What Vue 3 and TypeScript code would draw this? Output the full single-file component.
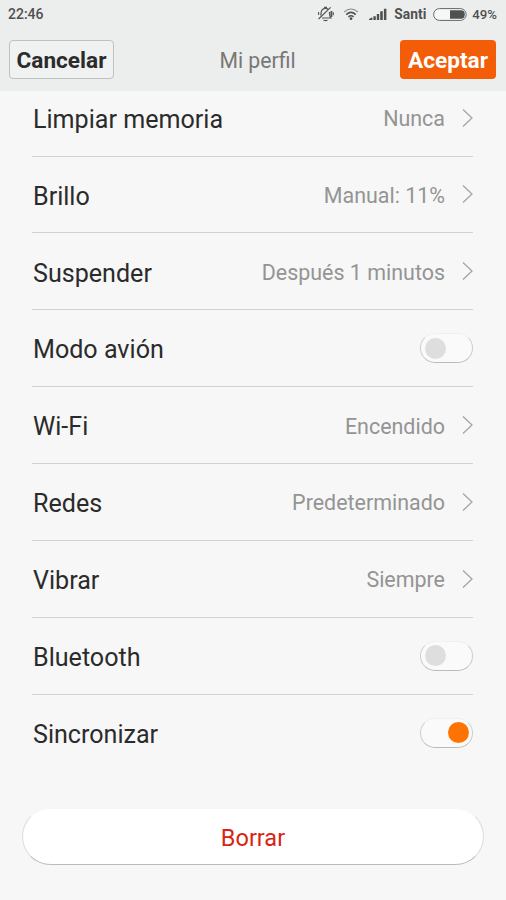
<script setup lang="ts">
interface Setting {
  label: string
  value?: string
  on?: boolean
}

const settings: Setting[] = [
  { label: 'Limpiar memoria', value: 'Nunca' },
  { label: 'Brillo', value: 'Manual: 11%' },
  { label: 'Suspender', value: 'Después 1 minutos' },
  { label: 'Modo avión', on: false },
  { label: 'Wi-Fi', value: 'Encendido' },
  { label: 'Redes', value: 'Predeterminado' },
  { label: 'Vibrar', value: 'Siempre' },
  { label: 'Bluetooth', on: false },
  { label: 'Sincronizar', on: true },
]
</script>

<template>
  <div class="screen">
    <header class="top">
      <div class="status">
        <span class="clock">22:46</span>
        <svg class="bell" width="18" height="16" viewBox="0 0 18 16" fill="none" stroke="#555" stroke-width="1.2">
          <path d="M3.6 9.5C4.3 8 3.8 6.6 4.6 4.8C5.4 3 7 2.4 8.6 2.4C9.8 2.4 10.6 2.8 11.2 3.5M12.4 6C12.6 8.5 12.2 10.2 13.8 12H5" />
          <path d="M1.6 13L13.6 1.4M6.5 14Q8.5 15.2 10.5 14M7 1.4H10" />
          <path d="M14.4 5V11" stroke-width="1.9" />
          <path d="M16.3 6.3V9.3M1.6 6V9" stroke-width="1.1" />
        </svg>
        <svg class="wifi" width="16" height="14" viewBox="0 0 16 14" fill="none" stroke="#505050">
          <path d="M1 5.2Q8 -1.2 15 5.2" stroke-width="1.1" stroke="#888" />
          <path d="M3.3 7.6Q8 3.3 12.7 7.6" stroke-width="1.7" />
          <path d="M5.4 9.9Q8 7.6 10.6 9.9" stroke-width="1.5" />
          <circle cx="8" cy="11.7" r="1.4" fill="#505050" stroke="none" />
        </svg>
        <svg class="signal" width="18" height="12" viewBox="0 0 18 12" fill="#505050">
          <path d="M0 12V11L3.4 9.3V12ZM4.4 12V8.2H6.8V12ZM7.8 12V5.9H10.2V12ZM11.2 12V3.3H13.8V12ZM14.9 12V.8H17.4V12Z" />
        </svg>
        <span class="carrier">Santi</span>
        <svg class="battery" width="34" height="13" viewBox="0 0 34 13">
          <rect x=".6" y=".6" width="32.6" height="11.8" rx="5.9" fill="#f7f7f7" stroke="#666" stroke-width="1" />
          <path d="M17 2.3H28Q31.8 2.3 31.8 6.5T28 10.7H17Z" fill="#505050" />
        </svg>
        <span class="percent">49%</span>
      </div>
      <div class="bar">
        <button class="btn cancel">Cancelar</button>
        <h1 class="title">Mi perfil</h1>
        <button class="btn accept">Aceptar</button>
      </div>
    </header>

    <main class="content">
      <ul class="list">
        <li v-for="s in settings" :key="s.label" class="row">
          <span class="label">{{ s.label }}</span>
          <template v-if="s.value">
            <span class="value">{{ s.value }}</span>
            <svg class="chevron" width="12" height="20" viewBox="0 0 12 20" fill="none" stroke="#a5a5a5" stroke-width="1.3">
              <path d="M2 1.5L11 10L2 18.5" />
            </svg>
          </template>
          <span v-else class="switch" :class="{ on: s.on }"><i class="knob"></i></span>
        </li>
      </ul>
      <button class="delete">Borrar</button>
    </main>
  </div>
</template>

<style>
body {
  margin: 0;
  background: #f7f7f7;
}
</style>

<style scoped>
.screen {
  height: 900px;
  display: flex;
  flex-direction: column;
  overflow: hidden;
  background: #f7f7f7;
  font-family: Roboto, "Liberation Sans", sans-serif;
}
.top {
  height: 91px;
  flex: none;
  background: #eceeed;
}
.status {
  display: flex;
  align-items: center;
  height: 28px;
  padding: 0 9px 0 8px;
  box-sizing: border-box;
  color: #505050;
  font-size: 14px;
  font-weight: 500;
}
.clock {
  margin-right: auto;
}
.bell {
  margin-right: 8px;
}
.wifi {
  margin-right: 10px;
}
.signal {
  margin-right: 7px;
}
.carrier {
  margin-right: 7px;
  font-weight: 700;
  font-size: 13.8px;
}
.battery {
  margin-right: 5px;
}
.percent {
  font-size: 13.2px;
}
.bar {
  display: grid;
  grid-template-columns: 105px 1fr 96px;
  align-items: center;
  height: 39px;
  padding: 12px 10px 0 9px;
}
.btn {
  height: 39px;
  box-sizing: border-box;
  padding: 2px 0 0;
  border-radius: 4px;
  font: 700 22.6px Roboto, sans-serif;
  line-height: 37px;
}
.cancel {
  border: 1px solid #bfc0c0;
  background: #f0f1f1;
  color: #2b2b2b;
  line-height: 35px;
}
.accept {
  border: 0;
  background: #f45d08;
  color: #fff;
}
.title {
  margin: 0 0 0 1px;
  padding-top: 2px;
  font-size: 21.2px;
  font-weight: 400;
  line-height: 37px;
  text-align: center;
  color: #777;
}
.content {
  flex: 1;
  overflow: hidden;
}
.list {
  list-style: none;
  margin: -11.3px 33px 0 32px;
  padding: 0;
}
.row {
  display: flex;
  align-items: center;
  height: 76.87px;
  box-sizing: border-box;
  border-bottom: 1px solid #d2d2d2;
}
.row:last-child {
  border-bottom-color: transparent;
}
.label {
  padding: 3.5px 0 0 1px;
  margin-right: auto;
  font-size: 25.1px;
  color: #2b2b2b;
}
.value {
  padding-top: 2px;
  margin-right: 16px;
  font-size: 21.45px;
  color: #949494;
}
.switch {
  display: flex;
  align-items: center;
  width: 53px;
  height: 30px;
  padding: 0 4px;
  box-sizing: border-box;
  border: 1px solid #ccc;
  border-top-color: #f0f0f0;
  border-bottom-color: #bbb;
  border-radius: 15px;
  background: #fafafa;
}
.knob {
  width: 21px;
  height: 21px;
  border-radius: 50%;
  background: #dedede;
}
.on {
  justify-content: flex-end;
  padding-right: 3px;
}
.on .knob {
  background: #ff7300;
}
.delete {
  display: block;
  width: 462px;
  height: 57px;
  margin: 36.7px 0 0 22px;
  padding: 3px 0 0;
  border: 1px solid #ddd;
  border-top-color: #f7f7f7;
  border-bottom-color: #bbb;
  border-radius: 28.5px;
  background: #fff;
  color: #d92414;
  font: 400 23.5px Roboto, sans-serif;
}
</style>
